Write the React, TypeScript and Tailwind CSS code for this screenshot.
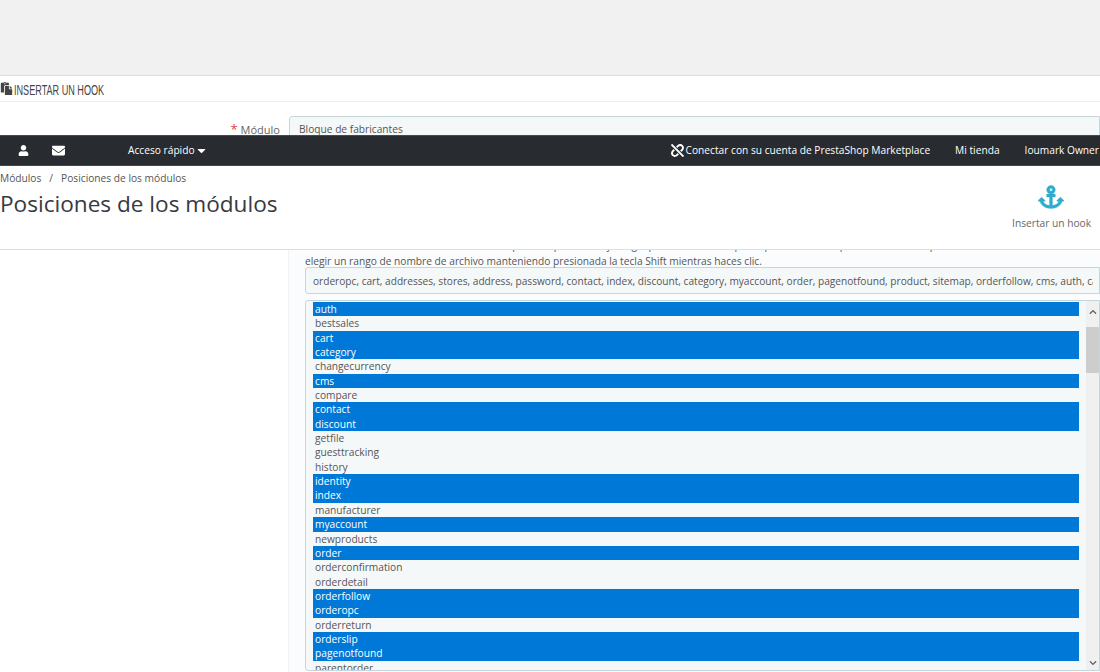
import { FaAnchor, FaCaretDown, FaChevronDown, FaChevronUp, FaEnvelope, FaPaste, FaUnlink, FaUser } from "react-icons/fa";

const pages = [
  { name: "auth", selected: true },
  { name: "bestsales" },
  { name: "cart", selected: true },
  { name: "category", selected: true },
  { name: "changecurrency" },
  { name: "cms", selected: true },
  { name: "compare" },
  { name: "contact", selected: true },
  { name: "discount", selected: true },
  { name: "getfile" },
  { name: "guesttracking" },
  { name: "history" },
  { name: "identity", selected: true },
  { name: "index", selected: true },
  { name: "manufacturer" },
  { name: "myaccount", selected: true },
  { name: "newproducts" },
  { name: "order", selected: true },
  { name: "orderconfirmation" },
  { name: "orderdetail" },
  { name: "orderfollow", selected: true },
  { name: "orderopc", selected: true },
  { name: "orderreturn" },
  { name: "orderslip", selected: true },
  { name: "pagenotfound", selected: true },
  { name: "parentorder" },
];

export default function App() {
  return (
    <div className="relative h-[672px] w-[1100px] overflow-hidden bg-white font-['Open_Sans',sans-serif] text-[10.2px] text-[#555]">
      <div className="h-[76px] border-b border-[#d9dcde] bg-[#f1f1f1]" />

      {/* Panel heading */}
      <div className="flex h-[26px] items-center gap-[1px] border-b border-[#eeeeee] text-[#555]">
        <FaPaste size={13} className="flex-none text-[#444]" />
        <span className="origin-left scale-x-[0.65] whitespace-nowrap pt-[2px] font-['Liberation_Sans',sans-serif] text-[14px] leading-none text-[#444]">INSERTAR UN HOOK</span>
      </div>

      {/* Form */}
      <div className="mt-[14px] flex">
        <label className="w-[280px] pt-[5px] text-right text-[11px] leading-[16px] text-[#666]">
          <span className="mr-[3px] text-[13px] text-[#e3413a]">*</span>Módulo
        </label>
        <div className="ml-[9px] h-[27px] flex-1 rounded-tl-[3px] border border-[#c7d6db] bg-[#f5f8f9] pl-[9px] pt-[4px] leading-[16px]">
          Bloque de fabricantes
        </div>
      </div>

      {/* Hook pages column */}
      <div className="ml-[288px] mt-[89px] h-[440px] border-l border-[#f0f3f5] bg-[#fbfcfd] pl-[16px] pt-[5px]">
        <div className="whitespace-nowrap leading-[16px]">
          <p>Por favor escribe los nombres de archivo separados por comas y, luego, presiona el botón para aplicarlos, o si lo prefieres, también puedes seleccionar varios o</p>
          <p>elegir un rango de nombre de archivo manteniendo presionada la tecla Shift mientras haces clic.</p>
        </div>

        <div className="mt-[-2px] h-[27px] overflow-hidden whitespace-nowrap rounded-l-[3px] border border-[#c7d6db] bg-[#f5f8f9] pl-[7px] pr-[6px] pt-[5px] text-[10.15px] leading-[16px]">
          <div className="w-[780px] overflow-hidden">
            orderopc, cart, addresses, stores, address, password, contact, index, discount, category, myaccount, order, pagenotfound, product, sitemap, orderfollow, cms, auth, cart, addresses
          </div>
        </div>

        {/* Page list */}
        <div className="mt-[6px] flex h-[371px] overflow-hidden rounded-l-[3px] border border-[#c7d6db] bg-[#f5f8f9]">
          <div className="w-[773px] flex-none pl-[7px] pt-[1px]">
            {pages.map((page) => (
              <div
                key={page.name}
                className={`h-[14.35px] pl-[2px] leading-[14.35px] ${page.selected ? "bg-[#0078d7] text-white" : "text-[#555]"}`}
              >
                {page.name}
              </div>
            ))}
          </div>
          <div className="ml-[7px] flex w-[14px] flex-none flex-col items-center bg-[#f0f0f0]">
            <FaChevronUp size={8} className="mt-[7px] text-[#606060]" />
            <div className="mt-[11px] h-[46px] w-full bg-[#cdcdcd]" />
            <FaChevronDown size={8} className="mb-[3px] mt-auto text-[#606060]" />
          </div>
        </div>
      </div>

      {/* Fixed header */}
      <div className="absolute inset-x-0 top-[135px] flex h-[31px] items-center border-y border-[#45484d] bg-[#282b30] text-white">
        <FaUser size={11} className="ml-[18px]" />
        <FaEnvelope size={13} className="ml-[23px]" />
        <span className="ml-[63px] flex items-center">
          Acceso rápido <FaCaretDown size={13} />
        </span>
        <span className="ml-auto flex items-center gap-[2px]">
          <FaUnlink size={13} /> Conectar con su cuenta de PrestaShop Marketplace
        </span>
        <span className="ml-[25px]">Mi tienda</span>
        <span className="ml-[25px] mr-[1px] whitespace-nowrap">Ioumark Owner</span>
      </div>

      {/* Page head */}
      <div className="absolute inset-x-0 top-[166px] flex h-[84px] justify-between border-b border-[#dcdfe0] bg-white">
        <div>
          <div className="mt-[5px] leading-[14px] text-[#555]">
            Módulos<span className="mx-[8px]">/</span>Posiciones de los módulos
          </div>
          <h1 className="mt-[3px] text-[22.6px] font-normal leading-[32px] text-[#363a41]">Posiciones de los módulos</h1>
        </div>
        <div className="mr-[9px] mt-[18px] flex flex-col items-center">
          <FaAnchor size={26} stroke="currentColor" strokeWidth={8} className="-ml-[1px] text-[#2eacce]" />
          <span className="mt-[6px] leading-[14px] text-[#666]">Insertar un hook</span>
        </div>
      </div>
    </div>
  );
}
